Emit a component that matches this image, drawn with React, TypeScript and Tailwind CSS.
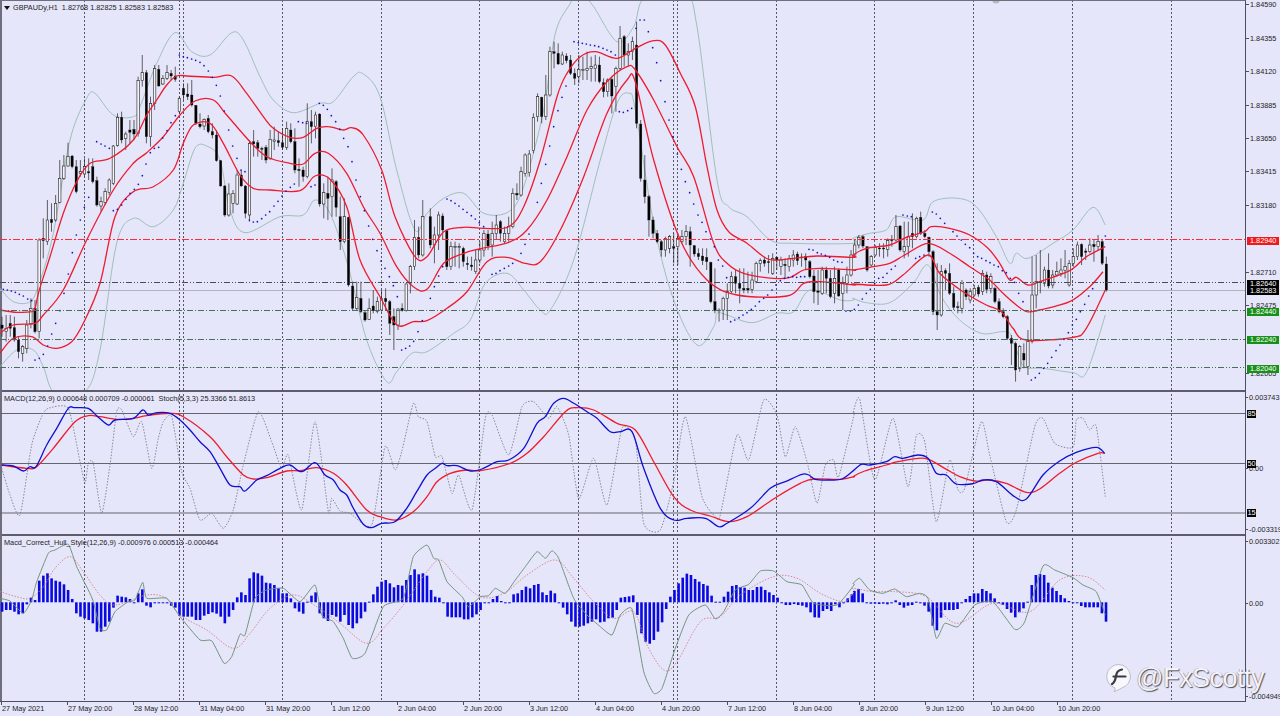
import React from "react";

const OFF = [0, 427, 853];

function pts(segs: string[], yBase = 0): [number, number][] {
  const out: [number, number][] = [];
  segs.forEach((s, k) => {
    s.trim().split(/\s+/).forEach((p) => {
      const [a, b] = p.split(",").map(Number);
      const x = OFF[k] + a / 3;
      const y = yBase + b / 3;
      if (out.length && Math.abs(out[out.length - 1][0] - x) < 1) return;
      out.push([x, y]);
    });
  });
  return out;
}

function smooth(p: [number, number][], div = 6): string {
  let d = `M${p[0][0].toFixed(1)} ${p[0][1].toFixed(1)}`;
  for (let i = 0; i < p.length - 1; i++) {
    const a = p[Math.max(0, i - 1)], b = p[i], c = p[i + 1], e = p[Math.min(p.length - 1, i + 2)];
    const c1x = b[0] + (c[0] - a[0]) / div, c1y = b[1] + (c[1] - a[1]) / div;
    const c2x = c[0] - (e[0] - b[0]) / div, c2y = c[1] - (e[1] - b[1]) / div;
    d += `C${c1x.toFixed(1)} ${c1y.toFixed(1)} ${c2x.toFixed(1)} ${c2y.toFixed(1)} ${c[0].toFixed(1)} ${c[1].toFixed(1)}`;
  }
  return d;
}

const candleSegs: [number, string][] = [
  [2, `950,975,985,1010,b 945,985,995,1025,w 945,970,985,1010,b 950,983,1020,1025,b 1010,1020,1055,1075,b 1035,1040,1060,1085,w 960,975,1045,1060,w 895,925,970,985,w 900,925,995,1000,b 715,720,995,1015,w 655,715,722,775,b 600,660,725,735,w 610,658,668,695,b 585,610,660,665,w 480,535,608,610,w 465,498,535,540,w 428,470,498,500,w 465,468,500,505,b 480,500,575,580,b 480,515,520,530,w 475,500,522,530,w 475,515,519,540,b 475,500,545,550,b 530,542,615,620,b 590,605,618,635,w 565,575,607,615,w 535,540,578,585,w 435,438,550,555,w 340,352,436,440,w 335,352,420,430,b 395,402,415,450,w 360,390,397,430,b 360,388,402,420,b 230,242,400,410,w 165,218,242,260,w 210,218,410,430,b 290,310,410,440,w 195,206,310,330,w 195,208,258,260,b 225,235,252,255,w 195,218,235,240,w 210,220,228,240,b 200,228,238,245,b 290,295,335,340,w 250,265,285,300,b 250,282,290,300,b 240,285,315,320,b 315,316,370,375,b 340,372,380,385,b 355,358,378,390,w 345,355,395,400,b 370,395,405,415,b 390,405,482,485,b 480,482,558,560,b 555,558,645,650,b 550,582,645,650,w 570,580,610,640,w 510,525,612,615,w 510,525,558,560,b 555,558,640,655,b 420,430,645,665,w 390,425,432,470,b 420,428,445,470,b 440,445,448,480,b 435,442,480,490,b 390,418,475,480,w 380,420,425,450,w 395,422,428,440,b 385,428,442,450,b 365,385,442,450,w 370,390,425,430,b 385,425,510,520,b 475,508,512,560,b 500,510,530,545,b 310,365,530,535,w 330,365,380,430,b 335,345,380,415,w 340,342,612,620,b 550,578,612,655,w 530,580,595,660,b 505,540,590,650,w 540,545,622,650,b 590,650,725,750,b 595,650,725,730,w 650,652,855,860,b 845,858,925,930,b 845,892,925,930,w 845,895,935,940,b 930,938,960,965,b 895,925,958,960,w 870,918,932,940,b 890,905,935,940,w 870,895,930,935,w 865,895,905,930,b 900,905,970,1005,b 925,950,975,1050,b 925,927,975,990,w 910,925,932,935,b 850,852,932,935,w 795,800,850,880,w 660,712,800,810,w 680,712,765,775,b 600,650,765,770,w`],
  [430.3, `625,650,735,745,b 680,705,735,790,w 635,645,705,750,w 640,648,690,720,b 690,692,800,810,b 725,740,800,810,w 725,740,743,800,w 730,740,743,805,w 740,745,785,800,b 770,790,794,810,b 770,795,800,812,b 750,780,815,822,w 725,750,780,790,w 690,700,750,770,w 690,702,738,750,b 665,700,735,770,w 645,675,700,720,w 660,665,700,725,b 680,700,725,730,w 650,680,700,725,w 565,580,680,685,w 550,580,585,600,b 500,515,585,590,w 460,465,520,530,w 450,462,518,530,w 340,352,452,460,w 280,290,350,365,w 290,292,350,370,b 225,285,350,360,w 140,155,285,290,w 125,155,160,205,b 130,160,192,195,b 155,165,192,195,w 160,168,182,190,b 165,180,220,225,b 205,220,235,255,b 165,208,230,250,w 170,208,212,240,w 155,205,212,240,w 170,200,206,245,w 165,195,206,245,w 170,195,245,250,b 235,248,275,292,b 235,240,275,290,w 230,238,288,340,b 200,205,260,335,w 78,115,205,210,w 105,110,165,200,b 130,155,165,200,w 110,125,155,180,w 65,135,370,385,b 360,372,535,545,b 465,540,590,610,b 585,590,660,710,b 650,660,700,715,b 690,700,725,730,b 720,725,750,770,b 710,715,750,770,w 705,710,745,760,w 700,740,745,790,b 700,715,740,795,w 690,710,725,730,w 675,695,710,735,w 680,695,735,800,b 735,737,762,770,b 745,760,770,780,b 745,768,782,795,b 745,772,785,810,b 785,787,905,910,b 805,905,932,940,b 925,930,933,965,b 890,895,930,960,w 850,875,895,960,w 815,830,875,880,w 810,830,850,880,b 805,850,865,910,b 805,865,870,880,b 815,865,870,880,b 815,840,868,880,w 785,790,845,850,w 775,782,790,815,w 770,780,790,800,b 765,785,788,820,b 760,775,820,825,w 770,772,780,810,b 770,780,800,825,w 775,793,797,835,b 765,775,800,815,w 750,765,780,800,w 755,762,782,795,b 760,771,774,800,b 760,770,780,810,b 780,785,830,835,b 810,828,875,910,b 810,873,877,915,b 800,810,880,885,w 800,810,835,880,b 810,835,890,895,b 800,835,880,910,w 805,810,888,890,b 830,850,880,930,w 800,825,850,880,w 750,765,825,830,w`],
  [854.7, `720,735,765,770,w 705,712,735,745,w 705,710,738,745,b 738,740,810,815,b 765,770,795,800,w 735,742,765,770,w 730,744,747,770,b 730,744,747,775,b 715,722,748,770,w 705,719,722,740,b 645,680,720,725,w 675,678,750,755,b 665,740,755,775,w 665,710,740,770,w 640,700,710,745,b 650,655,710,715,w 635,652,700,705,b 690,700,710,715,b 710,712,755,770,b 750,755,935,945,b 790,935,945,990,b 795,815,945,950,w 805,812,820,870,b 790,820,880,885,b 860,880,922,930,b 905,920,923,940,b 840,850,925,940,w 865,870,890,900,b 865,875,900,910,w 855,865,885,890,w 855,862,882,890,b 810,820,875,885,w 815,825,868,880,b 820,830,865,880,w 860,865,905,910,b 895,905,935,940,b 925,935,950,955,b 945,950,1015,1020,b 1005,1015,1030,1095,b 1025,1030,1110,1145,b 1035,1040,1105,1115,w 1030,1060,1080,1105,b 990,1025,1100,1125,w 770,885,1025,1030,w 765,845,885,925,w 750,844,848,880,b 800,810,850,860,w 760,810,858,865,b 810,825,855,865,w 785,815,825,830,w 775,810,820,830,w 750,800,812,835,w 780,790,855,860,w 745,770,790,800,w 725,735,770,780,w 730,733,770,795,b 745,753,757,780,b 715,735,755,760,w 720,733,740,785,b 705,725,740,750,w 720,725,790,795,b 770,792,870,875,b`],
];

const candles = candleSegs.flatMap(([start, s]) =>
  s.trim().split(/\s+/).map((c, j) => {
    const [h, t, b, l, k] = c.split(",");
    return { x: start + 4.125 * j, h: +h / 3, t: +t / 3, b: +b / 3, l: +l / 3, black: k === "b" };
  })
);

const histSegs: [number, string][] = [
  [2, "680 675 675 680 688 685 658 638 645 587 572 565 580 587 590 598 615 642 685 695 700 705 715 740 740 725 710 668 632 635 637 642 655 625 613 662 667 654 654 654 655 662 668 692 695 695 695 705 705 692 687 682 686 695 715 695 675 637 622 630 580 562 565 572 593 595 600 610 625 625 640 670 680 686 650 632 622 685 700 708 690 695 710 690 720 730 715 700 680 650 628 605 590 585 595 607 600 602 585 570 553 568 565 572"],
  [431, "615 635 638 655 695 697 697 697 703 703 697 688 675 654 653 642 633 648 652 652 628 625 615 605 610 600 597 622 630 617 625 652 668 688 710 725 725 722 715 710 703 712 710 700 698 675 638 636 634 631 690 745 770 776 765 740 712 672 635 615 595 578 566 570 582 590 597 602 632 650 650 635 620 603 600 606 608 615 615 606 605 615 622 630 638 652 660 660 657 660 662 667 682 697 698 678 672 678 658 667 655 640 628"],
  [854.3, "618 612 625 652 656 656 657 656 658 655 646 660 668 662 660 650 655 662 680 722 736 698 675 675 675 672 652 642 633 625 625 612 618 625 640 652 660 672 683 697 682 670 650 600 570 567 570 593 608 618 630 640 648 652 652 663 667 667 667 667 685 710"],
];

const hist = histSegs.flatMap(([start, s]) =>
  s.split(" ").map((v, j) => ({ x: start + 4.125 * j, y: 385 + +v / 3 }))
);

const redLines = [
  pts([
    "0,930 50,937 95,935 105,925 118,870 150,770 190,640 230,545 270,490 330,475 400,420 440,345 470,300 500,255 530,228 560,228 640,232 695,228 740,280 790,350 820,385 870,412 910,412 950,385 985,380 1030,390 1055,383 1090,405 1145,510 1185,650 1245,770 1281,770",
    "0,765 50,695 110,682 170,685 245,680 290,620 340,480 390,290 420,220 460,170 505,155 570,175 625,145 680,122 715,135 760,220 805,320 840,500 870,630 905,695 960,730 1010,770 1040,780 1100,775 1170,768 1281,772",
    "0,765 40,745 110,735 160,712 215,695 235,680 290,685 350,705 405,745 440,790 470,840 490,832 525,855 560,845 650,812 700,770 757,740",
  ]),
  pts([
    "0,1000 40,975 105,970 130,945 190,870 260,720 340,570 400,490 440,458 490,410 540,345 585,303 640,300 680,345 750,425 800,470 870,490 910,492 945,460 985,460 1040,520 1090,620 1140,700 1190,800 1240,860 1281,868",
    "0,840 50,790 110,760 165,745 245,727 300,690 360,600 420,470 480,330 540,245 600,200 625,210 680,300 750,440 800,530 860,730 900,790 950,820 1040,835 1090,832 1130,810 1180,805 1281,810",
    "0,810 50,802 110,790 155,765 225,730 290,760 350,800 410,840 450,880 490,915 522,935 560,930 650,905 710,860 750,815",
  ]),
  pts([
    "0,1060 40,1015 95,1010 130,1035 170,1045 215,1025 250,970 300,850 345,650 400,575 460,560 520,510 550,430 580,375 630,370 670,430 720,525 760,565 810,570 900,572 945,528 990,538 1040,620 1080,780 1140,890 1190,975 1240,965 1281,962",
    "0,965 60,925 120,875 180,785 240,772 295,790 340,785 400,690 470,530 540,340 600,240 625,245 680,480 760,720 840,840 930,885 1080,888 1130,850 1180,845 1281,855",
    "0,852 100,855 150,825 225,765 260,820 330,875 400,915 445,935 480,985 520,1020 660,1012 700,985 757,870",
  ]),
];

const bbLines = [
  pts([
    "0,865 40,905 90,905 118,850 160,700 210,420 260,295 285,280 340,345 400,350 420,320 470,190 525,98 575,155 630,165 695,98 730,120 780,230 820,300 880,338 960,310 1000,305 1060,230 1090,222 1140,290 1190,510 1245,690 1281,640",
    "0,660 50,595 110,580 170,640 245,635 290,560 350,330 385,100 430,10 440,-10 470,-10 500,20 570,125 620,80 655,-10 775,-10 810,80 870,540 905,620 960,650 1030,720 1100,730 1281,730",
    "0,715 50,700 100,690 130,650 210,660 240,605 315,595 370,620 430,710 470,790 490,760 525,775 600,730 660,690 720,622 757,675",
  ]),
  pts([
    "0,1100 50,1050 100,1050 130,1100 165,1180 255,1175 300,1050 350,730 400,655 460,680 520,630 550,550 585,445 620,438 660,480 690,630 735,698 840,650 910,645 945,600 990,640 1045,800 1100,1020 1160,1145 1190,1115 1235,1060 1281,1055",
    "0,1060 80,1000 130,960 175,850 240,820 290,870 340,930 370,930 440,780 520,480 570,310 605,280 625,330 680,670 740,900 810,1035 860,980 870,940 900,945 975,968 1050,940 1100,935 1150,870 1240,900 1281,900",
    "0,895 40,908 110,908 180,850 225,795 265,890 320,960 385,1000 445,995 470,1000 490,1050 515,1100 570,1105 660,1118 700,1118 757,945",
  ]),
];

const sar = pts([
  "10,868 22,870 34,873 46,877 58,883 70,888 83,897 95,902 105,1080 118,1075 130,1063 143,1038 155,1002 167,970 180,932 192,880 205,822 217,758 229,705 241,660 253,622 266,592 290,425 303,432 315,438 328,445 340,632 352,628 365,615 378,598 390,580 403,568 415,553 427,527 438,492 451,458 463,445 476,442 488,414 501,392 513,368 526,347 538,165 550,170 562,173 575,177 587,181 600,187 612,197 625,213 637,232 649,256 661,288 673,333 686,390 698,438 711,475 723,510 735,515 748,660 760,666 772,665 785,656 797,645 809,635 822,618 834,604 846,588 858,573 871,562 883,552 895,365 908,368 920,370 933,560 945,555 958,310 970,316 982,328 994,347 1007,365 1019,388 1031,415 1044,440 1056,485 1068,540 1081,590 1093,632 1106,678 1118,718 1131,752 1143,783 1155,805 1168,830 1180,857 1192,890 1205,1050 1217,1045 1229,1038 1241,1024 1254,995 1267,962",
  "10,895 22,860 35,828 47,800 60,597 72,602 84,610 96,618 108,628 120,637 133,647 145,657 157,668 170,680 195,823 207,820 219,812 232,805 245,798 257,790 282,760 294,733 306,702 331,607 343,550 356,493 368,438 380,380 393,332 405,292 417,258 441,125 454,128 466,130 478,132 490,135 503,137 515,140 528,145 540,150 552,155 565,165 577,335 589,337 602,332 614,325 627,85 639,60 652,60 664,95 677,143 689,188 701,242 714,305 726,360 738,410 751,462 763,508 775,545 788,578 800,612 813,645 825,667 837,695 850,717 862,740 874,780 887,798 899,833 911,965 923,960 936,953 948,945 960,938 973,928 985,918 997,905 1010,895 1022,885 1035,870 1047,855 1060,842 1072,835 1084,832 1097,830 1109,832 1121,830 1133,830 1146,748 1158,750 1171,758 1183,762 1195,766 1208,772 1220,780 1232,785 1245,787 1257,933 1270,933",
  "4,928 16,915 28,897 40,880 52,868 65,850 77,835 90,832 102,820 115,808 127,798 150,645 163,648 175,650 188,775 200,770 213,765 238,636 250,642 262,655 275,670 300,695 312,708 325,720 337,733 350,743 362,760 374,770 386,775 399,782 411,788 423,795 436,800 448,812 460,818 472,835 485,847 497,880 510,905 535,1140 547,1133 559,1120 572,1105 584,1090 596,1072 609,1052 621,1035 633,1018 646,998 658,975 670,958 682,935 695,913 707,888 719,866 757,708",
]);

const macdMain = pts([
  "5,240 40,243 70,258 90,245 108,245 140,180 170,130 205,70 225,68 265,70 290,92 325,120 345,105 400,100 428,75 445,90 470,83 510,85 540,105 570,135 600,170 630,200 660,250 690,300 720,305 735,318 770,285 800,272 840,250 870,240 905,260 945,233 975,270 1000,285 1020,315 1040,330 1060,370 1090,418 1115,428 1145,415 1185,410 1220,370 1250,320 1281,270",
  "0,270 25,250 45,235 60,242 90,242 130,258 165,252 210,230 245,225 290,190 330,115 355,95 380,55 410,40 440,55 480,80 510,100 550,140 580,140 615,140 650,250 700,370 740,405 780,400 835,400 875,425 900,415 970,370 1030,310 1075,290 1125,268 1145,270 1165,283 1205,285 1245,282 1281,255",
  "0,258 25,238 50,240 100,230 125,215 150,220 195,210 225,220 250,265 280,270 310,297 360,296 390,285 430,290 485,335 520,342 570,270 620,228 670,202 730,187 755,205",
], 385);

const macdSignal = pts([
  "5,240 80,250 110,245 160,190 225,110 265,92 300,95 350,103 400,100 440,92 510,85 550,95 630,155 680,215 730,270 760,282 800,278 860,258 900,257 950,248 1000,265 1040,300 1100,375 1140,395 1190,405 1240,380 1281,335",
  "0,335 30,290 70,265 120,255 160,257 250,235 300,205 350,155 415,80 450,68 500,75 570,115 625,135 680,230 740,335 790,375 850,393 905,410 960,395 1050,335 1120,295 1160,282 1240,283 1281,275",
  "0,275 35,258 100,240 135,230 215,220 275,250 320,275 365,288 410,285 460,295 520,322 560,312 620,265 670,232 735,205 755,205",
], 385);

const stoch = pts([
  "5,250 30,330 60,390 95,180 125,95 145,70 205,70 240,230 255,295 265,235 280,235 305,385 330,240 350,80 365,75 400,155 425,110 455,250 475,160 490,110 515,95 545,260 570,310 600,405 635,385 670,430 700,375 730,240 775,80 815,170 845,250 865,210 905,375 945,110 985,380 995,340 1020,378 1050,385 1115,420 1155,185 1185,255 1205,200 1240,55 1255,95 1281,110",
  "0,110 25,215 45,215 75,325 95,270 135,375 175,100 195,90 245,210 285,65 320,50 365,100 390,65 425,150 455,340 500,220 540,360 585,130 625,165 650,415 700,435 740,290 775,95 825,335 865,395 880,390 930,150 965,225 1010,45 1050,90 1075,215 1105,125 1140,230 1170,355 1195,240 1220,225 1235,275 1281,90",
  "0,85 20,42 65,285 120,100 165,305 190,152 215,170 250,410 290,225 315,315 335,310 385,110 410,210 460,410 490,375 545,125 570,100 605,175 660,187 670,105 690,100 710,135 730,125 757,335",
], 385);

const hullGreen = pts([
  "0,640 30,648 70,685 95,645 110,590 145,505 165,495 205,478 230,545 265,615 280,650 300,730 320,735 345,680 385,650 405,645 428,592 440,640 500,640 540,695 600,765 635,767 672,835 695,815 720,748 735,750 765,640 800,615 850,610 900,650 945,600 965,690 1000,710 1030,760 1057,820 1095,805 1150,665 1210,640 1240,515 1281,480",
  "0,480 20,520 35,525 60,590 105,635 125,665 160,635 185,632 205,610 235,625 265,585 295,545 330,500 355,520 375,497 395,520 440,640 480,690 520,725 555,750 580,690 615,672 650,860 680,925 705,910 745,790 785,690 835,660 865,702 890,680 925,615 965,598 1000,558 1040,558 1080,590 1125,600 1160,655 1230,660 1281,600",
  "0,595 20,580 50,615 90,625 125,612 160,635 200,625 225,640 250,760 275,715 315,725 365,660 420,650 485,733 515,710 570,543 605,555 660,578 690,600 730,620 757,690",
], 385);

const hullPink = pts([
  "0,620 50,635 90,640 130,605 165,550 210,515 250,560 300,630 345,660 440,630 500,640 540,690 620,735 700,790 750,745 810,670 880,630 950,665 1020,715 1100,775 1150,730 1210,660 1281,560",
  "0,550 40,525 85,570 160,635 230,625 300,570 385,525 440,580 500,650 560,700 620,680 660,780 710,855 750,830 820,710 880,695 940,630 1040,575 1110,580 1180,625 1250,650 1281,620",
  "0,610 60,620 125,620 220,635 310,715 420,655 530,680 620,585 700,575 757,615",
], 385);

const vLines = [84.5, 179.5, 183.5, 282.5, 381.5, 479.5, 578.5, 673.5, 677.5, 776.5, 874.5, 973.5, 1072.5, 1171.5];

const VGrid = ({ y0, y1 }: { y0: number; y1: number }) => (
  <g stroke="#555566" strokeWidth="1" strokeDasharray="2 2" fill="none">
    {vLines.map((x) => (
      <line key={x} x1={x} x2={x} y1={y0} y2={y1} />
    ))}
  </g>
);

const hLevels = [
  { y: 239.5, c: "#ff2a3a", dash: "7 2 2 2" },
  { y: 282.5, c: "#4a4a5c", dash: "6 2 1 2 1 2" },
  { y: 310.5, c: "#46705a", dash: "6 2 1 2" },
  { y: 339.5, c: "#46705a", dash: "6 2 1 2" },
  { y: 367.5, c: "#46705a", dash: "6 2 1 2 1 2" },
];

type Lab = { y: number; t: string; k?: "red" | "black" | "green" | "sub" };

const AxisLabel = ({ y, t, k }: Lab) => {
  if (k === "red" || k === "black" || k === "green") {
    const bg = k === "red" ? "bg-[#f01a1a]" : k === "black" ? "bg-black" : "bg-[#179017]";
    return (
      <span className={`absolute left-[1px] w-[32px] pl-[3px] text-[7.3px] leading-[8px] whitespace-nowrap text-white ${bg}`} style={{ top: y - 4 }}>
        {t}
      </span>
    );
  }
  return (
    <span className="absolute left-0 flex items-center whitespace-nowrap leading-[9px]" style={{ top: y - 4.5 }}>
      <i className={`h-px bg-[#4e4e5c] ${k === "sub" ? "w-[2px]" : "w-[3px]"}`} />
      <span className="pl-px">{t}</span>
    </span>
  );
};

const axisLabels: Lab[] = [
  { y: 4.5, t: "1.84590" },
  { y: 38, t: "1.84355" },
  { y: 71, t: "1.84120" },
  { y: 105, t: "1.83885" },
  { y: 138, t: "1.83650" },
  { y: 171.5, t: "1.83415" },
  { y: 205, t: "1.83180" },
  { y: 272.5, t: "1.82710" },
  { y: 305.5, t: "1.82475" },
  { y: 373.5, t: "1.82005" },
  { y: 240.8, t: "1.82940", k: "red" },
  { y: 283.5, t: "1.82640", k: "black" },
  { y: 290.5, t: "1.82583", k: "black" },
  { y: 312, t: "1.82440", k: "green" },
  { y: 340, t: "1.82240", k: "green" },
  { y: 368.7, t: "1.82040", k: "green" },
];

const macdLabels: Lab[] = [
  { y: 7, t: "0.003743", k: "sub" },
  { y: 78, t: "0.00", k: "sub" },
  { y: 139.7, t: "-0.003319", k: "sub" },
];

const macdTags = [
  { y: 23.5, t: "85" },
  { y: 73.7, t: "50" },
  { y: 123.3, t: "15" },
];

const hullLabels: Lab[] = [
  { y: 6, t: "0.003302", k: "sub" },
  { y: 68, t: "0.00", k: "sub" },
  { y: 161, t: "-0.004949", k: "sub" },
];

const timeLabels = [
  "27 May 2021", "27 May 20:00", "28 May 12:00", "31 May 04:00", "31 May 20:00", "1 Jun 12:00",
  "2 Jun 04:00", "2 Jun 20:00", "3 Jun 12:00", "4 Jun 04:00", "4 Jun 20:00", "7 Jun 12:00",
  "8 Jun 04:00", "8 Jun 20:00", "9 Jun 12:00", "10 Jun 04:00", "10 Jun 20:00",
];

const HLine = ({ y, c = "#64646f", w = 1 }: { y: number; c?: string; w?: number }) => (
  <line x1={0} x2={1245} y1={y} y2={y} stroke={c} strokeWidth={w} />
);

export default function App() {
  return (
    <div className="relative flex h-[716px] w-[1280px] flex-col overflow-hidden bg-[#e6e6fa] font-['Liberation_Sans',sans-serif] text-[7.3px] text-[#1c1c26]">
      <div className="flex h-[701px]">
        <div className="flex w-[1246px] flex-col border-t border-r border-l-2 border-[#6e6e7c] border-r-[#4e4e5c]">
          {/* Price panel */}
          <div className="relative h-[391px] border-b-2 border-[#5c5c6a]">
            <svg className="absolute left-[-2px] top-0 h-[389px] w-[1245px]" viewBox="0 1 1245 389">
              <VGrid y0={0} y1={392} />
              <HLine y={290.5} c="#b4b4c0" />
              {bbLines.map((p, i) => (
                <path key={i} d={smooth(p)} fill="none" stroke="#9fc0b8" strokeWidth="1" />
              ))}
              {candles.map((c, i) => (
                <g key={i}>
                  <line x1={c.x} x2={c.x} y1={c.h} y2={c.l} stroke="#222" strokeWidth="0.7" />
                  <rect
                    x={c.x - 1.2}
                    y={c.t}
                    width={2.4}
                    height={Math.max(c.b - c.t, 0.8)}
                    fill={c.black ? "#000" : "#f4f4f8"}
                    stroke="#222"
                    strokeWidth={c.black ? 0.3 : 0.6}
                  />
                </g>
              ))}
              {redLines.map((p, i) => (
                <path key={i} d={smooth(p)} fill="none" stroke="#ee1c30" strokeWidth="1.3" />
              ))}
              {sar.map((p, i) => (
                <circle key={i} cx={p[0]} cy={p[1]} r="0.85" fill="#1212c4" />
              ))}
              {hLevels.map((l) => (
                <line key={l.y} x1={0} x2={1245} y1={l.y} y2={l.y} stroke={l.c} strokeWidth="1" strokeDasharray={l.dash} />
              ))}
              <ellipse cx={996} cy={1} rx={3.5} ry={2.5} fill="#b8b8c0" />
            </svg>
            <div className="absolute left-[2px] top-[1px] flex items-center gap-[3px] leading-[11px]">
              <span className="h-0 w-0 border-x-[3px] border-t-[4px] border-x-transparent border-t-[#111]" />
              <span className="whitespace-pre">GBPAUDy,H1  1.82768 1.82825 1.82583 1.82583</span>
            </div>
          </div>

          {/* MACD / Stoch panel */}
          <div className="relative h-[144px] border-b-2 border-[#5c5c6a]">
            <svg className="absolute left-[-2px] top-0 h-[142px] w-[1245px]" viewBox="0 392 1245 142">
              <VGrid y0={390} y1={536} />
              <HLine y={413.5} />
              <HLine y={463.5} />
              <HLine y={513} />
              <path d={smooth(stoch, 10)} fill="none" stroke="#78808a" strokeWidth="0.9" strokeDasharray="1.5 1.5" />
              <path d={smooth(macdSignal)} fill="none" stroke="#ee1c2c" strokeWidth="1.3" />
              <path d={smooth(macdMain)} fill="none" stroke="#1010d0" strokeWidth="1.3" />
            </svg>
            <div className="absolute left-[2px] top-[1px] whitespace-pre leading-[11px]">
              MACD(12,26,9) 0.000648 0.000709 -0.000061  Stoch(5,3,3) 25.3366 51.8613
            </div>
          </div>

          {/* Hull panel */}
          <div className="relative flex-1">
            <svg className="absolute left-[-2px] top-0 h-[165px] w-[1245px]" viewBox="0 536 1245 165">
              <VGrid y0={534} y1={702} />
              {hist.map((b, i) => {
                const zero = 602.3;
                const top = Math.min(b.y, zero);
                return <rect key={i} x={b.x - 1.2} y={top} width={2.6} height={Math.max(Math.abs(b.y - zero), 1)} fill="#0a0ae0" />;
              })}
              <path d={smooth(hullPink)} fill="none" stroke="#d87c8a" strokeWidth="0.9" strokeDasharray="1.5 1.5" />
              <path d={smooth(hullGreen, 12)} fill="none" stroke="#6e9078" strokeWidth="0.95" />
            </svg>
            <div className="absolute left-[2px] top-[1px] whitespace-pre leading-[11px]">
              Macd_Correct_Hull_Style(12,26,9) -0.000976 0.000513 -0.000464
            </div>
          </div>
        </div>

        {/* Right axis */}
        <div className="flex flex-1 flex-col">
          <div className="relative h-[390px]">
            {axisLabels.map((l) => (
              <AxisLabel key={l.t} {...l} />
            ))}
          </div>
          <div className="relative h-[145px]">
            {macdLabels.map((l) => (
              <AxisLabel key={l.t} {...l} />
            ))}
            {macdTags.map((l) => (
              <span
                key={l.t}
                className="absolute left-[1px] w-[9px] bg-black text-center leading-[8px] text-white"
                style={{ top: l.y - 4 }}
              >
                {l.t}
              </span>
            ))}
          </div>
          <div className="relative flex-1">
            {hullLabels.map((l) => (
              <AxisLabel key={l.t} {...l} />
            ))}
          </div>
        </div>
      </div>

      {/* Time axis */}
      <div className="flex h-[15px] w-[1246px] border-t border-[#4e4e5c] pl-[1px]">
        {timeLabels.map((t) => (
          <div key={t} className="flex w-[66px] shrink-0 whitespace-nowrap leading-[13px]">
            <i className="h-[3px] w-px shrink-0 bg-[#4e4e5c]" />
            <span>{t}</span>
          </div>
        ))}
      </div>

      {/* Watermark */}
      <div className="absolute left-[1105px] top-[663px] flex items-center gap-[4px]">
        <svg width="27" height="30" viewBox="0 0 27 30">
          <path d="M13.5 1.5a12 12 0 0 1 3 23.6c-2.5 1.5-5 2.8-7.5 3.4 1-1.3 1.3-2.5 1-3.6A12 12 0 0 1 13.5 1.5Z" fill="#f7f7fc" stroke="#9a9aa6" strokeWidth="0.6" />
          <path d="M7 21c3.5-2 3.5-6 4.5-10 .7-2.6 2.500-4 5.500-4.500M8.500 13.500h12" fill="none" stroke="#3a3a44" strokeWidth="2.2" strokeLinecap="round" />
        </svg>
        <span className="whitespace-nowrap text-[27px] leading-[30px] tracking-[-0.5px] text-[#f3f3fb] [text-shadow:1px_1px_1px_#50505c,-0.5px_-0.5px_0.5px_#8a8a96]">
          @FxScotty
        </span>
      </div>
    </div>
  );
}
